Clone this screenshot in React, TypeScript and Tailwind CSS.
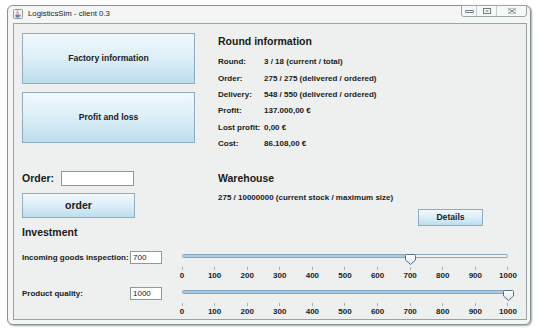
import React from 'react';

const TICKS = [0, 100, 200, 300, 400, 500, 600, 700, 800, 900, 1000];

const rounds: [string, string][] = [
  ['Round:', '3 / 18 (current / total)'],
  ['Order:', '275 / 275 (delivered / ordered)'],
  ['Delivery:', '548 / 550 (delivered / ordered)'],
  ['Profit:', '137.000,00 €'],
  ['Lost profit:', '0,00 €'],
  ['Cost:', '86.108,00 €'],
];

const btn =
  'flex items-center justify-center border border-[#8eacbd] bg-linear-to-b from-[#f2f9fc] via-[#dbeef7] to-[#bcdeed] font-bold text-[#1b1b1b]';

const Slider = ({ value }: { value: number }) => {
  const pct = (value / 1000) * 100;
  return (
    <div className="ml-[20px] w-[326px]">
      <div className="relative h-[10px]">
        <div className="mt-[3px] flex h-[4px] overflow-hidden rounded-full border border-[#8aa6ba] bg-[#f1f5f7]">
          <div className="bg-[#a7c9e2]" style={{ width: `${pct}%` }} />
        </div>
        <svg
          width="11"
          height="11"
          viewBox="0 0 11 11"
          className="absolute top-0"
          style={{ left: `calc(${pct}% - 5.5px)` }}
        >
          <defs>
            <linearGradient id="th" x1="0" y1="0" x2="0" y2="1">
              <stop offset="0" stopColor="#ffffff" />
              <stop offset="1" stopColor="#d7e6ef" />
            </linearGradient>
          </defs>
          <path d="M1.5 0.5 H9.5 Q10.5 0.5 10.5 1.5 V6 L5.5 10.5 L0.5 6 V1.5 Q0.5 0.5 1.5 0.5 Z" fill="url(#th)" stroke="#5d707d" />
        </svg>
      </div>
      <div className="-mx-[10px] mt-[3px] flex justify-between">
        {TICKS.map((t) => (
          <div key={t} className="flex w-[20px] flex-col items-center">
            <div className="h-[3px] w-px bg-[#a8b0b4]" />
            <span className="mt-[1px] text-[8px] font-bold leading-[10px] text-[#222]">{t}</span>
          </div>
        ))}
      </div>
    </div>
  );
};

const InvestRow = ({ label, value }: { label: string; value: number }) => (
  <div className="flex items-start">
    <div className="flex h-[13px] w-[108px] items-center whitespace-nowrap text-[8px] font-bold">{label}</div>
    <div className="flex h-[13px] w-[32px] items-center border border-[#8e989d] bg-white pl-[2px] text-[8px] leading-none">
      {value}
    </div>
    <Slider value={value} />
  </div>
);

const App: React.FC = () => {
  return (
    <div className="min-h-screen bg-white pl-[7px] pt-[5px] font-['Liberation_Sans',Arial,sans-serif] text-[#1a1a1a]">
      <div className="flex h-[320px] w-[524px] flex-col rounded-[6px] border border-[#859296] bg-[#f4f6f6] shadow-[1px_1px_2px_rgba(0,0,0,0.35)]">
        {/* Title bar */}
        <div className="flex h-[17px] shrink-0 items-start">
          <div className="flex items-center pl-[5px] pt-[3px]">
            <svg width="10" height="10" viewBox="0 0 10 10">
              <rect x="0.5" y="0.5" width="9" height="9" rx="1" fill="#f4f1ea" stroke="#9a9a9a" />
              <path d="M2.5 5.5 H6.5 V7.5 Q6.5 8.5 5.5 8.5 H3.5 Q2.5 8.5 2.5 7.5 Z" fill="#5a7fb0" />
              <path d="M6.5 6 Q8 6 7.5 7 Q7 7.6 6.4 7.4" fill="none" stroke="#5a7fb0" strokeWidth="0.7" />
              <path d="M4 4.6 Q3.4 3.6 4.2 2.8 Q4.8 2.2 4.3 1.5 M5.3 4.6 Q4.9 3.8 5.5 3.2" fill="none" stroke="#d0482a" strokeWidth="0.7" />
            </svg>
            <span className="ml-[5px] text-[7.8px] leading-none text-[#222]">LogisticsSim - client 0.3</span>
          </div>
          <div className="mr-[3px] ml-auto flex h-[12px] -mt-px rounded-b-[3px] border border-[#9aa5a9] bg-[#f7f9f9]">
            <div className="flex w-[15px] items-center justify-center border-r border-[#c3cbce]">
              <div className="h-[3px] w-[9px] rounded-[1px] border border-[#6f7b80]" />
            </div>
            <div className="flex w-[20px] items-center justify-center border-r border-[#c3cbce]">
              <svg width="8" height="6" viewBox="0 0 8 6">
                <rect x="0.5" y="0.5" width="7" height="5" fill="none" stroke="#6f7b80" />
                <rect x="2.5" y="2" width="3" height="2" fill="#a9b4b8" />
              </svg>
            </div>
            <div className="flex w-[29px] items-center justify-center">
              <svg width="8" height="6" viewBox="0 0 8 6">
                <path d="M0.5 0.5 L7.5 5.5 M7.5 0.5 L0.5 5.5" stroke="#6f7b80" strokeWidth="1" />
                <rect x="0.5" y="0.5" width="7" height="5" fill="none" stroke="#a9b4b8" strokeWidth="0.6" />
              </svg>
            </div>
          </div>
        </div>

        {/* Content */}
        <div className="mr-[3px] mb-[4px] ml-[5px] min-h-0 flex-1 overflow-hidden border border-[#98a3a6] bg-[#edf0ef] pl-[8px]">
          <div className="flex items-start pt-[9px]">
            {/* Left column */}
            <div className="flex w-[173px] flex-col">
              <div className={`${btn} h-[51px] text-[8.6px]`}>Factory information</div>
              <div className={`${btn} mt-[8px] h-[51px] text-[8.6px]`}>Profit and loss</div>
              <div className="mt-[28px] flex h-[15px] items-center">
                <span className="w-[39px] text-[10.5px] font-bold">Order:</span>
                <div className="h-[15px] w-[73px] border border-[#8e989d] bg-white" />
              </div>
              <div className={`${btn} mt-[7px] h-[25px] w-[113px] text-[10.5px]`}>order</div>
            </div>

            {/* Right column */}
            <div className="ml-[23px] flex flex-col pt-[2px]">
              <div className="text-[10.5px] leading-[12px] font-bold">Round information</div>
              <div className="mt-[7px] flex flex-col">
                {rounds.map(([k, v]) => (
                  <div key={k} className="flex h-[16.4px] items-center text-[8px] font-bold">
                    <span className="w-[46px]">{k}</span>
                    <span>{v}</span>
                  </div>
                ))}
              </div>
              <div className="mt-[20px] text-[10.5px] leading-[12px] font-bold">Warehouse</div>
              <div className="mt-[9px] text-[8px] leading-[10px] font-bold">
                275 / 10000000 (current stock / maximum size)
              </div>
              <div className={`${btn} mt-[6px] ml-[200px] h-[17px] w-[65px] text-[8.6px]`}>Details</div>
            </div>
          </div>

          {/* Investment */}
          <div className="text-[10.5px] leading-[12px] font-bold">Investment</div>
          <div className="mt-[13px] flex flex-col gap-[6px]">
            <InvestRow label="Incoming goods inspection:" value={700} />
            <InvestRow label="Product quality:" value={1000} />
          </div>
        </div>
      </div>
    </div>
  );
};

export default App;
